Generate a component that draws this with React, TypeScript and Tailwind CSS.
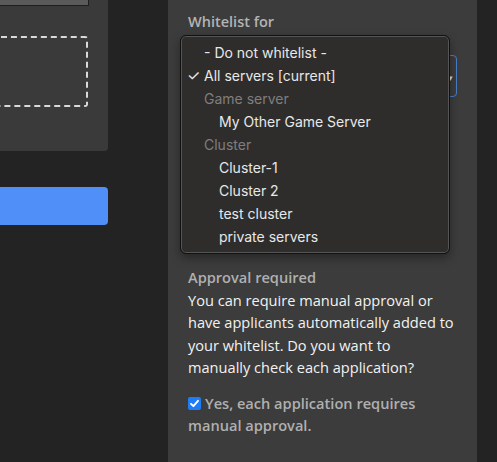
import React from "react";

export default function App() {
  const items: { label: string; kind: "opt" | "checked" | "group" | "sub" }[] = [
    { label: "- Do not whitelist -", kind: "opt" },
    { label: "All servers [current]", kind: "checked" },
    { label: "Game server", kind: "group" },
    { label: "My Other Game Server", kind: "sub" },
    { label: "Cluster", kind: "group" },
    { label: "Cluster-1", kind: "sub" },
    { label: "Cluster 2", kind: "sub" },
    { label: "test cluster", kind: "sub" },
    { label: "private servers", kind: "sub" },
  ];
  return (
    <div className="w-[497px] h-[462px] bg-[#232323] flex overflow-hidden relative" style={{ fontFamily: '"Open Sans", sans-serif' }}>
      {/* left column */}
      <div className="w-[108px] shrink-0 flex flex-col">
        <div className="h-[151px] bg-[#3a3a3a] rounded-br-[4px] overflow-hidden flex flex-col">
          <div className="h-[6px] w-[89px] bg-[#5a5a5a] border border-[#1e1e1e] border-t-0 border-l-0 shrink-0" />
          <div className="mt-[30px] ml-[-12px] w-[100px] h-[71px] border-2 border-dashed border-[#d9d9d9] rounded-[3px]" />
        </div>
        <div className="mt-[36px] h-[38px] bg-[#4f8ff7] rounded-r-[4px]" />
      </div>
      <div className="w-[60px] shrink-0" />
      {/* panel */}
      <div className="w-[309px] shrink-0 bg-[#3c3c3c] pl-[20px] pr-[20px] pt-[12px]">
        <div className="text-[14.5px] font-semibold text-[#b3b3b3] leading-[19px]">Whitelist for</div>
        <div className="mt-[24px] w-[269px] h-[42px] border border-[#4a7cc9] rounded-[4px] relative">
          <span className="absolute right-[3px] top-[17px] text-[#dddddd] text-[9px] leading-none">▾</span>
        </div>
        <div className="mt-[169px] text-[14.6px] font-semibold text-[#b0b0b0] leading-[22.5px]">Approval required</div>
        <div className="w-[268px] text-[14.6px] text-[#f2f2f2] leading-[22.5px]">
          You can require manual approval or have applicants automatically added to your whitelist. Do you want to manually check each application?
        </div>
        <div className="mt-[13px] w-[268px] text-[14.6px] font-semibold text-[#b0b0b0] leading-[22.5px]">
          <span className="inline-block w-[13px] h-[13px] bg-[#1f7cf6] rounded-[2px] align-[-1px] mr-[4px] relative">
            <svg viewBox="0 0 13 13" className="absolute inset-0 w-[13px] h-[13px]">
              <path d="M3 6.8 L5.4 9.2 L10 3.8" fill="none" stroke="#ffffff" strokeWidth="1.9" strokeLinecap="round" strokeLinejoin="round" />
            </svg>
          </span>
          Yes, each application requires manual approval.
        </div>
      </div>
      <div className="flex-1" />

      {/* dropdown menu */}
      <div
        className="absolute left-[180px] top-[35px] w-[270px] h-[219px] bg-[#2e2d2c] rounded-[6px] border border-[#111] shadow-[inset_0_0_0_1px_#555,0_4px_10px_rgba(0,0,0,0.35)] pt-[5px]"
        style={{ fontFamily: 'Inter, "Noto Sans", sans-serif' }}
      >
        {items.map((it) => (
          <div key={it.label} className="h-[23px] flex items-center text-[14px] leading-none relative">
            {it.kind === "checked" && <span className="absolute left-[6px] text-[#e8e8e8] text-[15px]">✓</span>}
            <span
              className={
                it.kind === "group"
                  ? "pl-[23px] text-[#7e7e7e]"
                  : it.kind === "sub"
                  ? "pl-[38px] text-[#e8e8e8]"
                  : "pl-[23px] text-[#e8e8e8]"
              }
            >
              {it.label}
            </span>
          </div>
        ))}
      </div>
    </div>
  );
}
